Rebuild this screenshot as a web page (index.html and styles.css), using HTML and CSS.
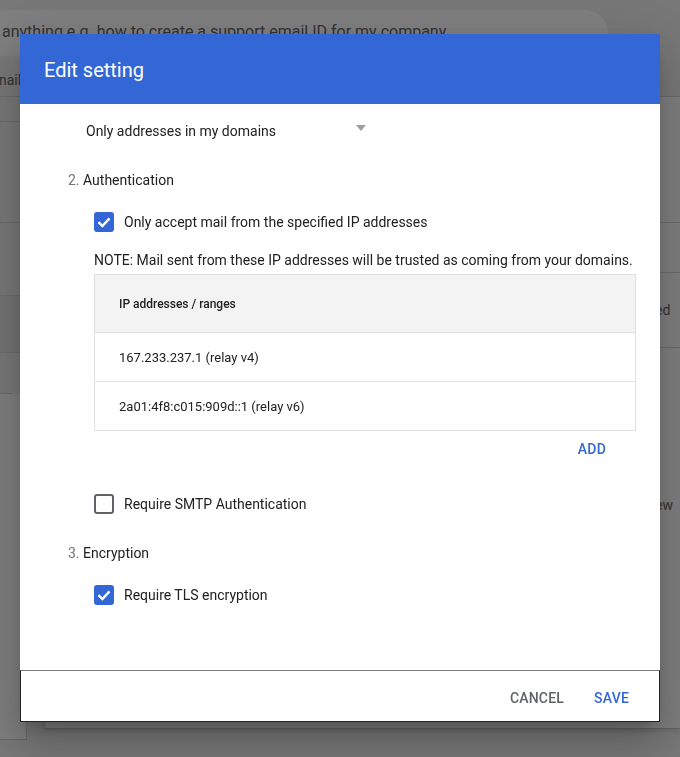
FILE: index.html
```html
<!DOCTYPE html>
<html lang="en">
<head>
    <meta charset="UTF-8">
    <meta name="viewport" content="width=device-width, initial-scale=1.0">
    <title>Edit setting</title>
    <link rel="stylesheet" href="styles.css">
</head>
<body>
    <!-- page behind the dialog -->
    <div class="page">
        <div class="search"><span>anything e.g. how to create a support email ID for my company</span></div>
        <div class="tabs"><span>nail</span></div>
        <div class="content">
            <div class="col-left">
                <div class="lrow lrow-a"></div>
                <div class="lrow lrow-b"></div>
                <div class="lrow lrow-c"></div>
                <div class="lrow lrow-d"></div>
                <div class="lrow lrow-e"></div>
                <div class="lcard"></div>
            </div>
            <div class="main-card">
                <div class="col-right">
                    <div class="rrow rrow-a"></div>
                    <div class="rrow rrow-b"></div>
                    <div class="rrow rrow-c">ed</div>
                    <div class="rrow rrow-d"></div>
                    <div class="rtext">ew</div>
                </div>
            </div>
        </div>
    </div>

    <div class="scrim"></div>

    <div class="dialog">
        <div class="dialog-header">Edit setting</div>

        <div class="dialog-body">
            <div class="select">
                <span>Only addresses in my domains</span>
                <span class="arrow"></span>
            </div>

            <div class="step"><span class="step-num">2.</span> Authentication</div>

            <div class="check-row">
                <span class="box">
                    <svg width="20" height="20" viewBox="0 0 20 20"><polyline points="4.5,10.2 8.4,14 15.5,6.4" fill="none" stroke="#fff" stroke-width="2.4"/></svg>
                </span>
                <span>Only accept mail from the specified IP addresses</span>
            </div>

            <div class="note">NOTE: Mail sent from these IP addresses will be trusted as coming from your domains.</div>

            <div class="ip-table">
                <div class="ip-head">IP addresses / ranges</div>
                <div class="ip-row">167.233.237.1 (relay v4)</div>
                <div class="ip-row">2a01:4f8:c015:909d::1 (relay v6)</div>
            </div>
            <div class="table-actions">
                <span class="btn btn-primary">Add</span>
            </div>

            <div class="check-row smtp">
                <span class="box off"></span>
                <span>Require SMTP Authentication</span>
            </div>

            <div class="step enc"><span class="step-num">3.</span> Encryption</div>

            <div class="check-row">
                <span class="box">
                    <svg width="20" height="20" viewBox="0 0 20 20"><polyline points="4.5,10.2 8.4,14 15.5,6.4" fill="none" stroke="#fff" stroke-width="2.4"/></svg>
                </span>
                <span>Require TLS encryption</span>
            </div>
        </div>

        <div class="dialog-footer">
            <span class="btn">Cancel</span>
            <span class="btn btn-primary">Save</span>
        </div>
    </div>
</body>
</html>
```

FILE: styles.css
```css
body {
    font-family: Roboto, "Liberation Sans", sans-serif;
    margin: 0;
    background-color: #f1f1f1;
}
.page {
    height: 757px;
    overflow: hidden;
    background-color: #f1f1f1;
}
.search {
    margin-top: 10px;
    width: 608px;
    height: 46px;
    background-color: #fff;
    border-radius: 0 23px 23px 0;
    font-size: 16px;
    line-height: 44px;
    color: #666;
    white-space: nowrap;
    overflow: hidden;
    padding-left: 2px;
    box-sizing: border-box;
}
.tabs {
    height: 41px;
    box-sizing: border-box;
    padding-top: 14px;
    line-height: 20px;
    font-size: 14px;
    color: #666;
    border-bottom: 1px solid #d8d8d8;
    margin-left: -1px;
}
.content {
    display: flex;
}
.col-left {
    width: 45px;
    flex-shrink: 0;
}
.lrow {
    border-bottom: 1px solid #d8d8d8;
}
.lrow-a { height: 24px; }
.lrow-b { height: 100px; }
.lrow-c { height: 72px; }
.lrow-d { height: 56px; background-color: #e8e8e8; }
.lrow-e { height: 40px; width: 12px; }
.lcard {
    width: 27px;
    height: 346px;
    background-color: #fff;
    border-right: 1px solid #d0d0d0;
    border-bottom: 1px solid #d0d0d0;
    box-sizing: border-box;
}
.main-card {
    flex: 1;
    height: 631px;
    background-color: #fff;
    border-bottom: 1px solid #c8c8c8;
    box-shadow: -2px 2px 4px rgba(0, 0, 0, 0.12);
    display: flex;
    justify-content: flex-end;
}
.col-right {
    width: 25px;
    font-size: 14px;
    color: #666;
}
.rrow {
    border-bottom: 1px solid #d8d8d8;
}
.rrow-a { height: 125px; }
.rrow-b { height: 49px; }
.rrow-c { height: 74px; line-height: 74px; }
.rrow-d { height: 0; border-bottom: none; }
.rtext {
    margin-top: 147px;
    line-height: 20px;
}
.scrim {
    position: fixed;
    top: 0;
    left: 0;
    right: 0;
    bottom: 0;
    background-color: rgba(0, 0, 0, 0.5);
}
.dialog {
    position: fixed;
    left: 20px;
    top: 34px;
    width: 640px;
    height: 688px;
    background-color: #fff;
    display: flex;
    flex-direction: column;
    box-shadow: 0 11px 15px -7px rgba(0, 0, 0, 0.2), 0 24px 38px 3px rgba(0, 0, 0, 0.14), 0 9px 46px 8px rgba(0, 0, 0, 0.12);
}
.dialog-header {
    height: 70px;
    box-sizing: border-box;
    padding-top: 2px;
    flex-shrink: 0;
    background-color: #3367d6;
    color: #fff;
    font-size: 20px;
    padding-left: 24px;
    display: flex;
    align-items: center;
}
.dialog-body {
    flex: 1;
    overflow: hidden;
    padding: 0 24px 0 48px;
    font-size: 14px;
    color: #212121;
}
.select {
    display: flex;
    justify-content: space-between;
    align-items: center;
    width: 280px;
    height: 54px;
    margin-left: 18px;
}
.arrow {
    width: 0;
    height: 0;
    border-left: 5px solid transparent;
    border-right: 5px solid transparent;
    border-top: 6px solid #9e9e9e;
    margin-top: -6px;
}
.step {
    height: 44px;
    line-height: 44px;
}
.step-num {
    color: #757575;
}
.step.enc {
    margin-top: 7px;
}
.check-row {
    display: flex;
    align-items: center;
    gap: 10px;
    height: 40px;
    margin-left: 26px;
}
.check-row.smtp {
    margin-top: 17px;
}
.box {
    width: 20px;
    height: 20px;
    border-radius: 3px;
    background-color: #3367d6;
    display: flex;
    flex-shrink: 0;
}
.box.off {
    background-color: #fff;
    border: 2px solid #5f6368;
    box-sizing: border-box;
}
.note {
    margin-left: 26px;
    height: 32px;
    padding-top: 8px;
    line-height: 20px;
    box-sizing: border-box;
    white-space: nowrap;
}
.ip-table {
    margin-left: 26px;
    border: 1px solid #e0e0e0;
}
.ip-head {
    height: 57px;
    background-color: #f3f3f3;
    border-bottom: 1px solid #e0e0e0;
    font-size: 12px;
    font-weight: 500;
    padding-left: 24px;
    display: flex;
    align-items: center;
}
.ip-row {
    height: 48px;
    border-bottom: 1px solid #e0e0e0;
    padding-left: 24px;
    font-size: 13px;
    display: flex;
    align-items: center;
}
.ip-row:last-child {
    border-bottom: none;
}
.table-actions {
    display: flex;
    justify-content: flex-end;
    align-items: center;
    height: 36px;
    padding-right: 22px;
}
.btn {
    font-size: 14px;
    font-weight: 500;
    text-transform: uppercase;
    letter-spacing: 0.2px;
    padding: 0 8px;
    color: #5f6368;
    cursor: pointer;
}
.btn-primary {
    color: #3367d6;
}
.dialog-footer {
    height: 52px;
    flex-shrink: 0;
    box-sizing: border-box;
    border-top: 1px solid #7a7a7a;
    border-left: 1px solid #222;
    border-right: 1px solid #222;
    border-bottom: 1px solid #222;
    display: flex;
    justify-content: flex-end;
    align-items: center;
    gap: 14px;
    padding-top: 3px;
    padding-right: 22px;
}
```
